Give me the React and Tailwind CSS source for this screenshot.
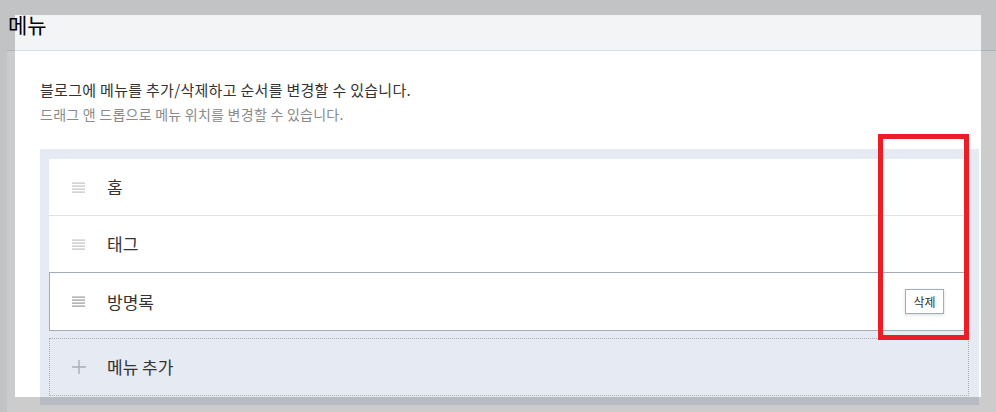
import React from 'react';

const font = { fontFamily: '"Noto Sans CJK KR", "Noto Sans", sans-serif' };

const Handle = ({ color }) => (
  <svg width="13" height="11" viewBox="0 0 13 11" className="shrink-0">
    {[0, 3, 6, 9].map((y) => (
      <rect key={y} x="0" y={y + 0.5} width="13" height="1.2" fill={color} />
    ))}
  </svg>
);

const MenuRow = ({ label, active, last }) => {
  if (active) {
    return (
      <div className="h-[59px] flex items-center pl-[22px] pr-[24px] bg-white border border-[#a4acb8]">
        <Handle color="#9a9a9a" />
        <span className="ml-[22px] text-[17px] text-[#333] flex-1">{label}</span>
        <button className="w-[39px] h-[25px] flex items-center justify-center text-[12px] text-[#333] bg-white border border-[#a4acb8] shadow-[0_1px_3px_rgba(0,0,0,0.15)]">
          삭제
        </button>
      </div>
    );
  }
  return (
    <div
      className={
        last
          ? 'h-[56px] flex items-center pl-[23px] bg-white'
          : 'h-[57px] flex items-center pl-[23px] bg-white border-b border-[#e1e2e8]'
      }
    >
      <Handle color="#c2c2c2" />
      <span className="ml-[22px] text-[17px] text-[#333]">{label}</span>
    </div>
  );
};

export default function App() {
  return (
    <div className="w-[996px] h-[412px] relative overflow-hidden bg-white flex" style={font}>
      {/* left strip */}
      <div className="w-[7px] bg-[#f3f4f6]" />

      <div className="flex-1 flex flex-col">
        {/* header */}
        <div className="h-[51px] bg-[#f3f4f6] border-b border-[#d6dfe7] pt-[14px] pl-[1px] shrink-0">
          <h1 className="text-[21px] leading-[20px] text-black">메뉴</h1>
        </div>

        {/* content */}
        <div className="pl-[33px] pr-[17px] pt-[29px]">
          <p className="text-[15px] leading-[20px] tracking-[0.3px] text-[#333]">
            블로그에 메뉴를 추가/삭제하고 순서를 변경할 수 있습니다.
          </p>
          <p className="mt-[5px] text-[14px] leading-[18px] tracking-[0.25px] text-[#8a8a8a]">
            드래그 앤 드롭으로 메뉴 위치를 변경할 수 있습니다.
          </p>

          <div className="mt-[26px] bg-[#e6eaf2] pl-[9px] pr-[10px] pt-[10px] pb-[9px]">
            <MenuRow label="홈" />
            <MenuRow label="태그" last />
            <MenuRow label="방명록" active />

            <div className="mt-[7px] h-[58px] flex items-center pl-[22px] border border-dotted border-[#a8abb0]">
              <svg width="14" height="14" viewBox="0 0 14 14" className="shrink-0">
                <path d="M7 0v14M0 7h14" stroke="#a9adb4" strokeWidth="1.4" />
              </svg>
              <span className="ml-[21px] text-[17px] text-[#333]">메뉴 추가</span>
            </div>
          </div>
        </div>
      </div>

      {/* focus overlay */}
      <div className="absolute left-[15px] top-[15px] w-[966px] h-[382px] pointer-events-none shadow-[0_0_0_2000px_rgba(0,0,0,0.2)]" />

      {/* annotation box */}
      <div className="absolute left-[878px] top-[134px] w-[91px] h-[206px] border-[5px] border-[#ee1c25] pointer-events-none" />
    </div>
  );
}
